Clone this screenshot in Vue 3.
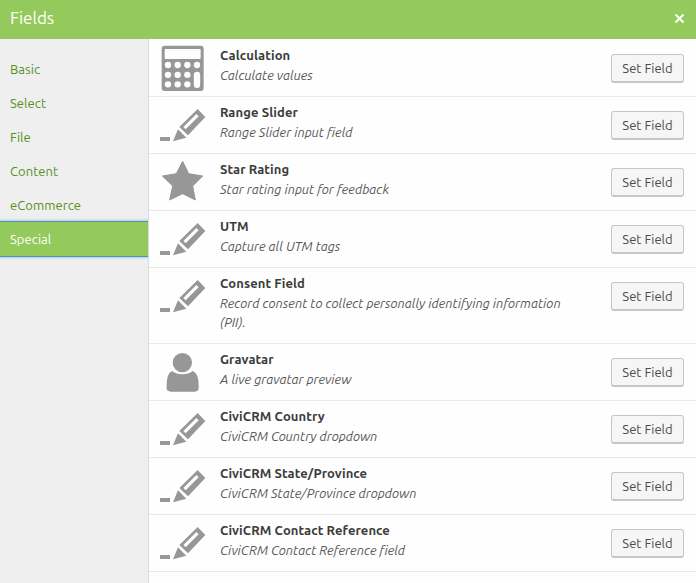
<script setup>
const tabs = ['Basic', 'Select', 'File', 'Content', 'eCommerce', 'Special']
const active = 'Special'
const fields = [
  { name: 'Calculation', desc: 'Calculate values', icon: 'calculator' },
  { name: 'Range Slider', desc: 'Range Slider input field', icon: 'pencil' },
  { name: 'Star Rating', desc: 'Star rating input for feedback', icon: 'star' },
  { name: 'UTM', desc: 'Capture all UTM tags', icon: 'pencil' },
  { name: 'Consent Field', desc: 'Record consent to collect personally identifying information (PII).', icon: 'pencil' },
  { name: 'Gravatar', desc: 'A live gravatar preview', icon: 'person' },
  { name: 'CiviCRM Country', desc: 'CiviCRM Country dropdown', icon: 'pencil' },
  { name: 'CiviCRM State/Province', desc: 'CiviCRM State/Province dropdown', icon: 'pencil' },
  { name: 'CiviCRM Contact Reference', desc: 'CiviCRM Contact Reference field', icon: 'pencil' },
]
</script>

<template>
  <div class="modal">
    <header class="head">
      <h1>Fields</h1>
      <button class="close" aria-label="Close">
        <svg viewBox="0 0 11 11"><path d="M1.500 1.500l8 8M9.500 1.500l-8 8" /></svg>
      </button>
    </header>
    <div class="body">
      <nav class="tabs">
        <a v-for="t in tabs" :key="t" class="tab" :class="{ active: t === active }">{{ t }}</a>
      </nav>
      <main class="list">
        <section v-for="f in fields" :key="f.name" class="row">
          <svg class="icon" viewBox="0 0 144 144">
            <path
              v-if="f.icon === 'calculator'"
              fill-rule="evenodd"
              d="M17 5H125Q134 5 134 14V132Q134 141 125 141H17Q8 141 8 132V14Q8 5 17 5ZM20 15Q17 15 17 18V42Q17 45 20 45H122Q125 45 125 42V18Q125 15 122 15Z"
            />
            <g v-if="f.icon === 'calculator'" class="hole">
              <circle v-for="n in 4" :key="n" :cx="n * 29 - 2" cy="63" r="9.5" />
              <circle v-for="n in 3" :key="n" :cx="n * 29 - 2" cy="92.500" r="9.5" />
              <circle v-for="n in 3" :key="n" :cx="n * 29 - 2" cy="121" r="9.5" />
              <rect x="104.500" y="83" width="19" height="49" rx="9.5" />
            </g>
            <g v-if="f.icon === 'pencil'">
              <path fill-rule="evenodd" d="M116 24L139 48L87 103L61 78ZM112 39L73 78L80 85L119 46Z" />
              <path d="M57 85L82 110L42 121Z" />
              <path d="M3 108H33V120H3Z" />
            </g>
            <path
              v-if="f.icon === 'star'"
              class="round"
              d="M71 10L89 47L131 54L101 84L109 126L71 107L32 126L41 84L10 54L52 47Z"
            />
            <g v-if="f.icon === 'person'">
              <circle cx="70" cy="44" r="29" />
              <path d="M39 69Q23 76 23 112V121Q23 131 36 131H106Q119 131 119 121V112Q119 76 101 69Q88 79 70 79Q52 79 39 69Z" />
            </g>
          </svg>
          <div class="text">
            <h2>{{ f.name }}</h2>
            <p>{{ f.desc }}</p>
          </div>
          <button class="set">Set Field</button>
        </section>
      </main>
    </div>
  </div>
</template>

<style>
body { margin: 0; overflow: hidden; }
</style>

<style scoped>
.modal {
  height: 583px;
  display: flex;
  flex-direction: column;
  overflow: hidden;
  background: #fefefe;
  font-family: Ubuntu, "Noto Sans", sans-serif;
  font-size: 13px;
}
.head {
  height: 39px;
  flex: none;
  box-sizing: border-box;
  display: flex;
  align-items: flex-start;
  justify-content: space-between;
  padding: 8px 11px 0 10px;
  background: #94c95c;
}
h1 { margin: 0; font-size: 17px; font-weight: 400; color: #fff; line-height: 20px; }
.close { display: flex; margin-top: 5px; padding: 0; border: 0; background: none; }
.close svg { width: 11px; height: 11px; }
.close path { stroke: #fff; stroke-width: 2; fill: none; }
.body { flex: 1; min-height: 0; display: flex; }
.tabs {
  width: 148px;
  flex: none;
  padding-top: 13px;
  background: #efefef;
  border-right: 1px solid #dcdcdc;
}
.tab { display: block; height: 34px; line-height: 34px; padding-left: 10px; color: #56911f; letter-spacing: 0.06px; }
.tab.active {
  background: #94c95c;
  color: #fff;
  box-shadow: 0 0 0 1px #5b8fae, 0 0 2px 2px #a8cdf0;
  clip-path: inset(-4px 0);
}
.list { flex: 1; padding-top: 1px; }
.row {
  display: flex;
  align-items: flex-start;
  padding: 0 12px 11px 10px;
  border-bottom: 1px solid #e9e9e9;
}
.icon { width: 48px; height: 48px; margin: 4px 13px -7px 0; flex: none; fill: #979797; }
.hole { fill: #fefefe; }
.round { stroke: #979797; stroke-width: 3; stroke-linejoin: round; }
.text { width: 350px; padding-top: 5px; }
h2 { margin: 0 0 1px; font-size: 13px; line-height: 20px; font-weight: 700; color: #3c3c3c; letter-spacing: 0.1px; }
p { margin: 0; line-height: 19px; font-style: italic; color: #585858; letter-spacing: 0.02px; }
.set {
  width: 73px;
  height: 29px;
  margin: 14px 0 -7px auto;
  padding: 0;
  box-sizing: border-box;
  border: 1px solid #c6c6c6;
  border-bottom-width: 2px;
  border-radius: 3px;
  background: #f6f6f6;
  color: #4c4c4c;
  font: inherit;
  line-height: 26px;
}
</style>
